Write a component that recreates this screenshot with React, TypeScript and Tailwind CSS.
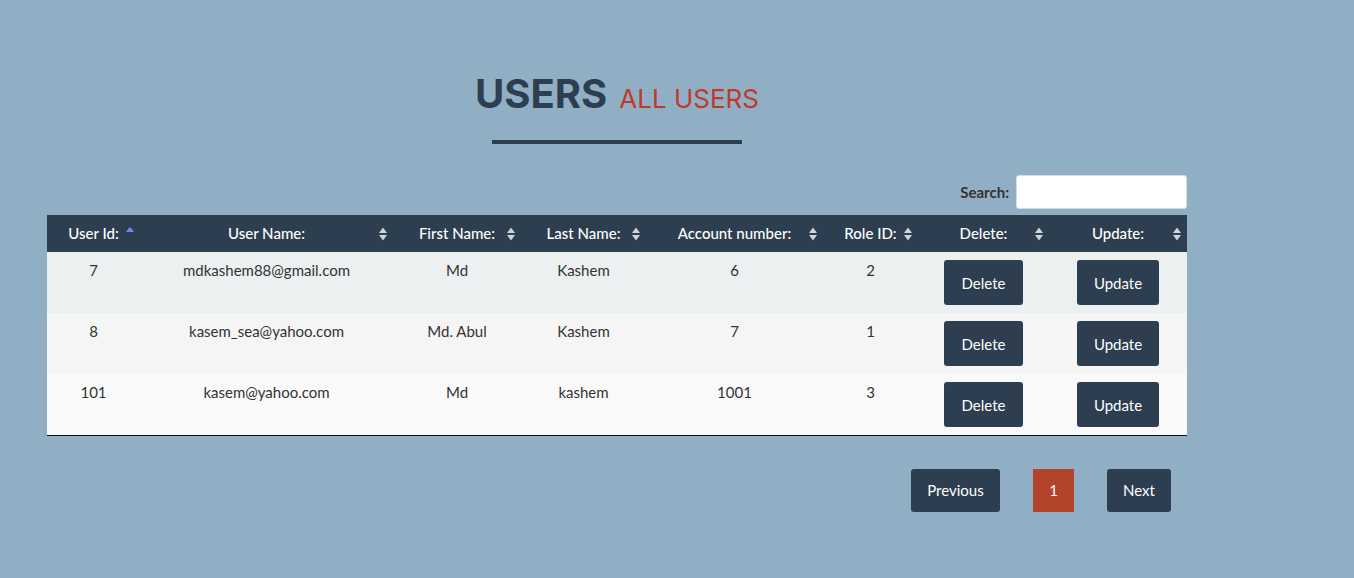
import React from 'react'

type User = {
  id: number
  userName: string
  firstName: string
  lastName: string
  account: number
  roleId: number
}

const users: User[] = [
  { id: 7, userName: 'mdkashem88@gmail.com', firstName: 'Md', lastName: 'Kashem', account: 6, roleId: 2 },
  { id: 8, userName: 'kasem_sea@yahoo.com', firstName: 'Md. Abul', lastName: 'Kashem', account: 7, roleId: 1 },
  { id: 101, userName: 'kasem@yahoo.com', firstName: 'Md', lastName: 'kashem', account: 1001, roleId: 3 },
]

const rowBg = ['bg-[#ecf0f1]', 'bg-[#f5f5f5]', 'bg-[#f9f9f9]']

// Both arrows (unsorted) or only the up arrow (ascending)
function SortIcon({ active }: { active?: boolean }) {
  return (
    <svg width="8" height="13" viewBox="0 0 8 13" className="absolute right-[6px] top-1/2 -translate-y-1/2">
      {active ? (
        <path d="M4 0 L8 5.5 L0 5.5 Z" fill="#7b83e6" transform="translate(0 -1)" />
      ) : (
        <>
          <path d="M4 0 L8 5.5 L0 5.5 Z" fill="#cfd4da" />
          <path d="M0 7.5 L8 7.5 L4 13 Z" fill="#cfd4da" />
        </>
      )}
    </svg>
  )
}

const columns = [
  { label: 'User Id:', w: 'w-[93px]', active: true },
  { label: 'User Name:', w: 'w-[253px]' },
  { label: 'First Name:', w: 'w-[128px]' },
  { label: 'Last Name:', w: 'w-[125px]' },
  { label: 'Account number:', w: 'w-[177px]' },
  { label: 'Role ID:', w: 'w-[95px]' },
  { label: 'Delete:', w: 'w-[131px]' },
  { label: 'Update:', w: 'w-[138px]' },
]

export default function App() {
  return (
    <div className="min-h-[578px] bg-[#90afc5] font-['Lato','Open_Sans',sans-serif] text-[#333]">
      <div className="ml-[47px] w-[1140px] pt-[74px]">
        {/* Title */}
        <div className="flex flex-col items-center">
          <h1 className="flex items-baseline gap-[12px] font-['Inter','Noto_Sans',sans-serif] leading-none">
            <span className="text-[40px] font-bold text-[#2c3e50]">USERS</span>
            <span className="text-[26px] font-normal text-[#c0392b]">ALL USERS</span>
          </h1>
          <div className="mt-[26px] h-[4px] w-[250px] bg-[#2c3e50]" />
        </div>

        {/* Search */}
        <div className="mt-[31px] flex items-center justify-end gap-[7px]">
          <label className="text-[15px] font-bold text-[#333]">Search:</label>
          <input className="h-[34px] w-[171px] rounded-[3px] border border-[#d5dde3] bg-white outline-none" />
        </div>

        {/* Table */}
        <table className="mt-[6px] w-[1140px] table-fixed border-collapse border-b border-[#111]">
          <thead>
            <tr className="bg-[#2c3e50] text-white">
              {columns.map((c) => (
                <th key={c.label} className={`${c.w} relative h-[37px] px-0 text-center text-[15px] font-medium`}>
                  {c.label}
                  <SortIcon active={c.active} />
                </th>
              ))}
            </tr>
          </thead>
          <tbody>
            {users.map((u, i) => (
              <tr key={u.id} className={`${rowBg[i]} text-[15px] leading-[20px]`}>
                <td className="pt-[8px] align-top text-center">{u.id}</td>
                <td className="pt-[8px] align-top text-center">{u.userName}</td>
                <td className="pt-[8px] align-top text-center">{u.firstName}</td>
                <td className="pt-[8px] align-top text-center">{u.lastName}</td>
                <td className="pt-[8px] align-top text-center">{u.account}</td>
                <td className="pt-[8px] align-top text-center">{u.roleId}</td>
                <td className="py-[8px] text-center">
                  <button className="h-[45px] w-[79px] rounded-[3px] bg-[#2c3e50] text-[15px] text-white">Delete</button>
                </td>
                <td className="py-[8px] text-center">
                  <button className="h-[45px] w-[82px] rounded-[3px] bg-[#2c3e50] text-[15px] text-white">Update</button>
                </td>
              </tr>
            ))}
          </tbody>
        </table>

        {/* Pagination */}
        <div className="mt-[33px] flex justify-end gap-[33px] pr-[16px] text-[15px] text-white">
          <button className="h-[43px] w-[89px] rounded-[3px] bg-[#2c3e50]">Previous</button>
          <button className="h-[43px] w-[41px] bg-[#b4432c]">1</button>
          <button className="h-[43px] w-[64px] rounded-[3px] bg-[#2c3e50]">Next</button>
        </div>
      </div>
    </div>
  )
}
